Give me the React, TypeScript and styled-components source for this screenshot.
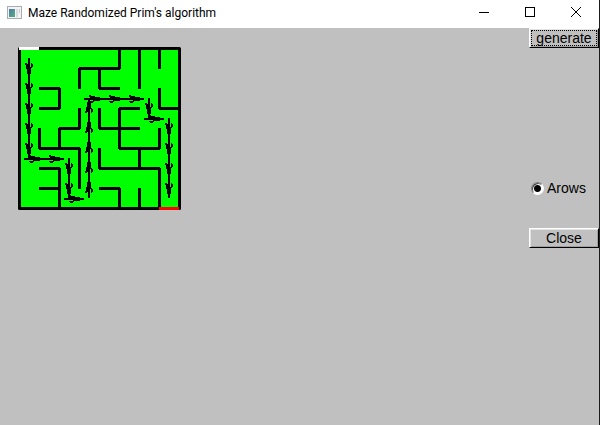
import React, { useState } from 'react';
import styled, { createGlobalStyle } from 'styled-components';

const GlobalStyle = createGlobalStyle`
  * { box-sizing: border-box; }
  body { margin: 0; background: #c0c0c0; }
`;

const Window = styled.div`
  min-height: 100vh;
  display: flex;
  flex-direction: column;
  background: #c0c0c0;
  border-right: 1px solid #1c1c1c;
`;

const TitleBar = styled.header`
  display: flex;
  align-items: center;
  height: 28px;
  padding-left: 7px;
  padding-bottom: 3px;
  background: #fff;
`;

const Title = styled.h1`
  flex: 1;
  margin: 0 0 0 6px;
  font: 400 12px/16px Roboto, "Noto Sans", sans-serif;
  color: #000;
`;

const CaptionButton = styled.button`
  display: flex;
  align-items: center;
  justify-content: center;
  width: 46px;
  height: 25px;
  padding: 0;
  border: 0;
  background: transparent;
`;

const Body = styled.main`
  flex: 1;
  display: flex;
  justify-content: space-between;
  align-items: flex-start;
`;

const MazeView = styled.svg`
  display: block;
  margin: 18px 0 0 17px;
`;

const Controls = styled.aside`
  display: flex;
  flex-direction: column;
  width: 70px;
`;

const PushButton = styled.button`
  width: 100%;
  height: 20px;
  padding: 0;
  border: 1px solid;
  border-color: #fff #000 #000 #fff;
  box-shadow: inset 1px 1px #e3e3e3, inset -1px -1px #a0a0a0;
  background: #c0c0c0;
  color: #000;
  font: 14px/16px "Liberation Sans", Arial, sans-serif;
  outline: none;
`;

const FocusFrame = styled.span<{ $focused?: boolean }>`
  display: flex;
  align-items: center;
  justify-content: center;
  height: 16px;
  margin: 0 1px;
  border: 1px dotted ${(p) => (p.$focused ? '#000' : 'transparent')};
`;

const RadioLabel = styled.label`
  display: flex;
  align-items: center;
  gap: 3px;
  height: 20px;
  margin: 130px 0 30px 2px;
  color: #000;
  font: 14px/20px "Liberation Sans", Arial, sans-serif;
`;

const Radio = styled.input`
  appearance: none;
  width: 13px;
  height: 13px;
  margin: 0;
  border: 1px solid;
  border-color: #808080 #fff #fff #808080;
  border-radius: 50%;
  background: #fff;
  box-shadow: inset 1px 1px #404040;
  &:checked {
    background: radial-gradient(circle, #000 3px, #fff 4px);
  }
`;

type Segment = [number, number, number, number];

/* Inner walls, in grid units: x1, y1, x2, y2 */
const walls: Segment[] = [
  [3, 1, 3, 2], [3, 1, 5, 1], [4, 1, 4, 2], [4, 2, 5, 2],
  [5, 0, 5, 1], [6, 0, 6, 2], [7, 0, 7, 1], [7, 2, 7, 3], [7, 3, 8, 3],
  [1, 2, 2, 2], [2, 2, 2, 3], [1, 3, 2, 3],
  [3, 3, 3, 4], [2, 4, 3, 4], [1, 4, 1, 5], [1, 5, 3, 5], [2, 4, 2, 5], [3, 5, 3, 7],
  [1, 6, 2, 6], [2, 6, 2, 8], [1, 7, 2, 7],
  [4, 3, 4, 4], [5, 3, 6, 3], [5, 3, 5, 5], [4, 4, 6, 4],
  [7, 4, 7, 5], [5, 5, 7, 5], [6, 5, 6, 6], [4, 6, 7, 6], [4, 5, 4, 6],
  [7, 6, 7, 8], [4, 7, 5, 7], [5, 7, 5, 8], [6, 7, 6, 8],
];

/* Solution route from the start cell, one letter per step */
const route = 'DDDDDRRDDRUUUUURRRDRDDDD';
const moves: Record<string, [number, number, number]> = {
  R: [1, 0, 0], D: [0, 1, 90], L: [-1, 0, 180], U: [0, -1, 270],
};

const CELL = 20;

function wallPath([x1, y1, x2, y2]: Segment) {
  return x1 === x2
    ? `M${x1 * CELL} ${y1 * CELL - 0.5}V${y2 * CELL + 0.5}`
    : `M${x1 * CELL - 0.5} ${y1 * CELL}H${x2 * CELL + 0.5}`;
}

function routeArrows() {
  let x = 0;
  let y = 0;
  return [...route].map((step) => {
    const [dx, dy, angle] = moves[step];
    const arrow = {
      x: x * CELL + 9.5 - Math.abs(dx) * 5,
      y: y * CELL + 9.5 + Math.abs(dx),
      angle,
      flip: step === 'D' ? 1 : -1,
    };
    x += dx;
    y += dy;
    return arrow;
  });
}

function Maze({ showArrows }: { showArrows: boolean }) {
  return (
    <MazeView width="166" height="166" viewBox="-2.5 -2.5 166 166" role="img" aria-label="Maze">
      <rect width="160" height="160" fill="#00ff00" stroke="#000" strokeWidth="3" strokeLinejoin="round" />
      <path
        d={walls.map(wallPath).join('')}
        stroke="#000" strokeWidth="3" fill="none" shapeRendering="crispEdges"
      />
      <path d="M-.5 0H19.5" stroke="#fff" strokeWidth="3" />
      <path d="M139.5 160H159.5" stroke="#f00" strokeWidth="3" />
      {showArrows && routeArrows().map((a, i) => (
        <g
          key={i}
          transform={`translate(${a.x} ${a.y}) rotate(${a.angle}) scale(1 ${a.flip})`}
          fill="#000"
          shapeRendering="crispEdges"
        >
          <path d="M0 -1H20V1H0Z" />
          <path d="M9 -2H16V2H9Z" />
          <path d="M5 2H7V4H5Z" />
          <path d="M6 1H11V3H6Z" />
          <path d="M5 -3H10V-2H5Z" />
          <path d="M6 -4H9V-3H6Z" />
        </g>
      ))}
    </MazeView>
  );
}

export default function App() {
  const [arrows, setArrows] = useState(true);
  return (
    <>
      <GlobalStyle />
      <Window>
        <TitleBar>
          <svg width="15" height="13" viewBox="0 0 15 13" aria-hidden="true">
            <defs>
              <linearGradient id="pane" x1="0" y1="0" x2="1" y2="1">
                <stop offset="0" stopColor="#4a78b0" />
                <stop offset="1" stopColor="#58b078" />
              </linearGradient>
            </defs>
            <rect x=".5" y=".5" width="14" height="12" fill="#f4f4f4" stroke="#a8acb0" />
            <rect x="2" y="3" width="6" height="8" fill="url(#pane)" />
            <rect x="9" y="3" width="2" height="8" fill="#d8dce0" />
            <rect x="12" y="3" width="1" height="4" fill="#c8ccd0" />
          </svg>
          <Title>Maze Randomized Prim's algorithm</Title>
          <CaptionButton aria-label="Minimize">
            <svg width="11" height="11"><path d="M0 5.5H10" stroke="#000" /></svg>
          </CaptionButton>
          <CaptionButton aria-label="Maximize">
            <svg width="11" height="11"><rect x=".5" y=".5" width="9" height="9" fill="none" stroke="#000" /></svg>
          </CaptionButton>
          <CaptionButton aria-label="Close window">
            <svg width="11" height="11"><path d="M0 0L10 10M10 0L0 10" stroke="#000" /></svg>
          </CaptionButton>
        </TitleBar>
        <Body>
          <Maze showArrows={arrows} />
          <Controls>
            <PushButton><FocusFrame $focused>generate</FocusFrame></PushButton>
            <RadioLabel>
              <Radio type="radio" checked={arrows} onClick={() => setArrows(!arrows)} readOnly />
              Arows
            </RadioLabel>
            <PushButton><FocusFrame>Close</FocusFrame></PushButton>
          </Controls>
        </Body>
      </Window>
    </>
  );
}
